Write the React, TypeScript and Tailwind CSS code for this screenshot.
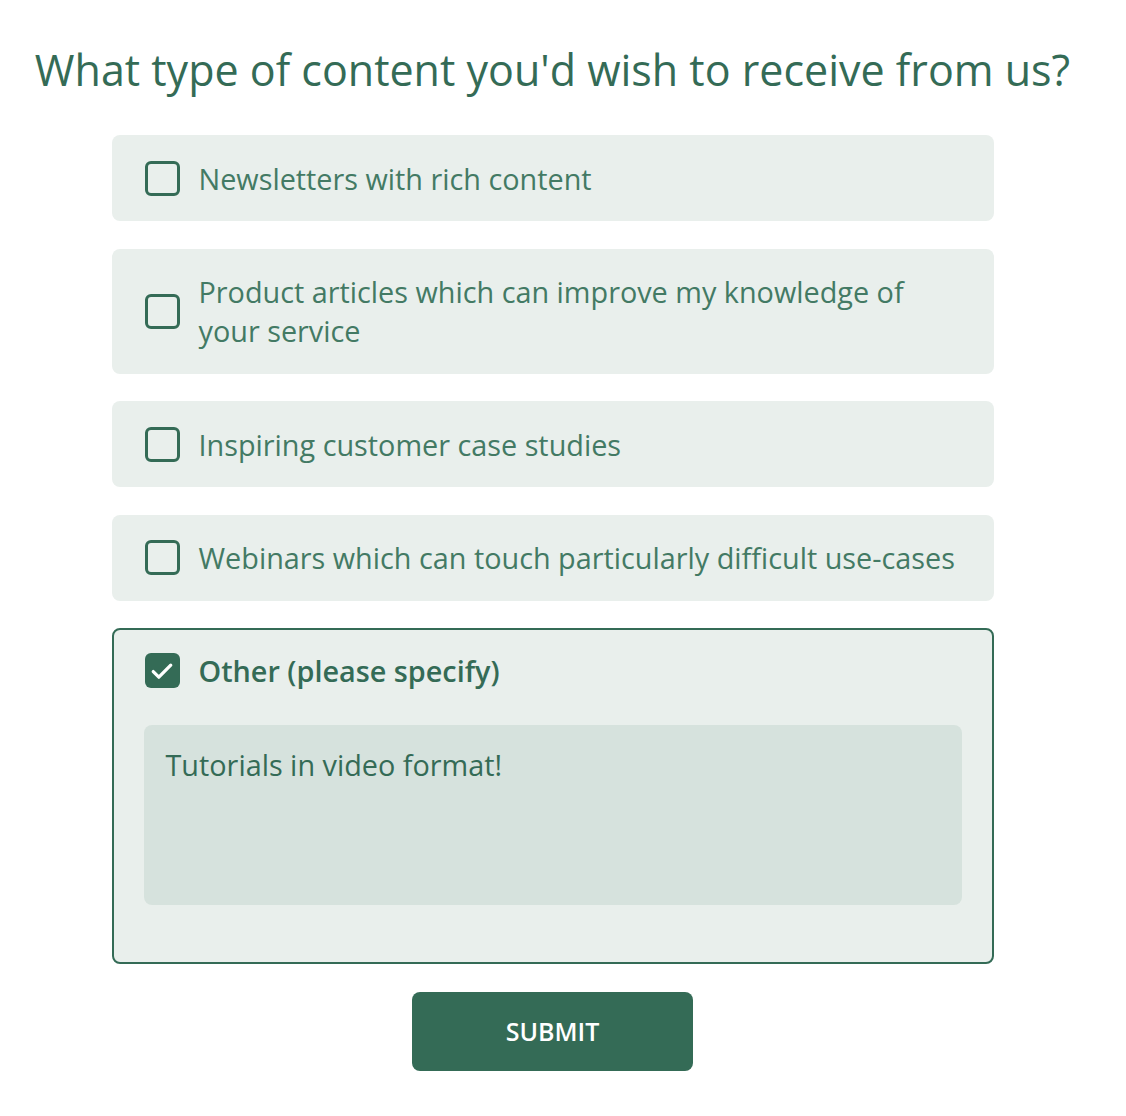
import { useState } from "react";

const green = "#346b56";

const options = [
  "Newsletters with rich content",
  "Product articles which can improve my knowledge of your service",
  "Inspiring customer case studies",
  "Webinars which can touch particularly difficult use-cases",
];

const Box = ({ checked }: { checked: boolean }) =>
  checked ? (
    <span className="flex h-[35px] w-[35px] shrink-0 items-center justify-center rounded-[6px] bg-[#346b56]">
      <svg width="28" height="28" viewBox="0 0 24 24" fill="none" stroke="white" strokeWidth="2.8" strokeLinecap="round" strokeLinejoin="round">
        <path d="M4.5 12.5l4.8 4.8L19.5 7" />
      </svg>
    </span>
  ) : (
    <span className="h-[35px] w-[35px] shrink-0 rounded-[6px] border-[3px] border-[#346b56]" />
  );

export default function App() {
  const [checked, setChecked] = useState<boolean[]>([false, false, false, false]);
  const [other, setOther] = useState(true);
  const [text, setText] = useState("Tutorials in video format!");

  return (
    <div
      className="w-[1105px] bg-white pt-[40px] pb-[45px] text-[#346b56]"
      style={{ fontFamily: '"Open Sans", "Noto Sans", sans-serif' }}
    >
      <h1 className="text-center text-[43px] leading-[60px] font-normal">
        What type of content you'd wish to receive from us?
      </h1>

      <div className="mx-auto mt-[35px] flex w-[882px] flex-col gap-[27.5px]">
        {options.map((opt, i) => (
          <label
            key={opt}
            className="flex cursor-pointer items-center gap-[19px] rounded-[8px] bg-[#e9efec] py-[23.5px] pr-[28px] pl-[33px]"
            onClick={() => setChecked(checked.map((c, j) => (j === i ? !c : c)))}
          >
            <Box checked={checked[i]} />
            <span className={`text-[28.8px] leading-[39px] text-[#437a64] ${i === 1 ? "max-w-[720px]" : ""}`}>{opt}</span>
          </label>
        ))}

        <div className="rounded-[8px] border-[2.5px] border-[#346b56] bg-[#e9efec] px-[30px] pt-[21px] pb-[57px]">
          <label
            className="flex cursor-pointer items-center gap-[19px] pl-[1px]"
            onClick={() => setOther(!other)}
          >
            <Box checked={other} />
            <span className="text-[28.8px] leading-[39px] font-semibold">Other (please specify)</span>
          </label>
          <textarea
            value={text}
            onChange={(e) => setText(e.target.value)}
            className="mt-[35px] block h-[180px] w-full resize-none rounded-[8px] bg-[#d6e2dd] px-[22px] py-[20px] text-[28.8px] leading-[39px] text-[#346b56] outline-none"
            style={{ fontFamily: "inherit" }}
          />
        </div>
      </div>

      <div className="mt-[28px] flex justify-center">
        <button
          className="h-[79px] w-[281px] rounded-[8px] text-[25px] font-semibold text-white"
          style={{ backgroundColor: green }}
        >
          SUBMIT
        </button>
      </div>
    </div>
  );
}
